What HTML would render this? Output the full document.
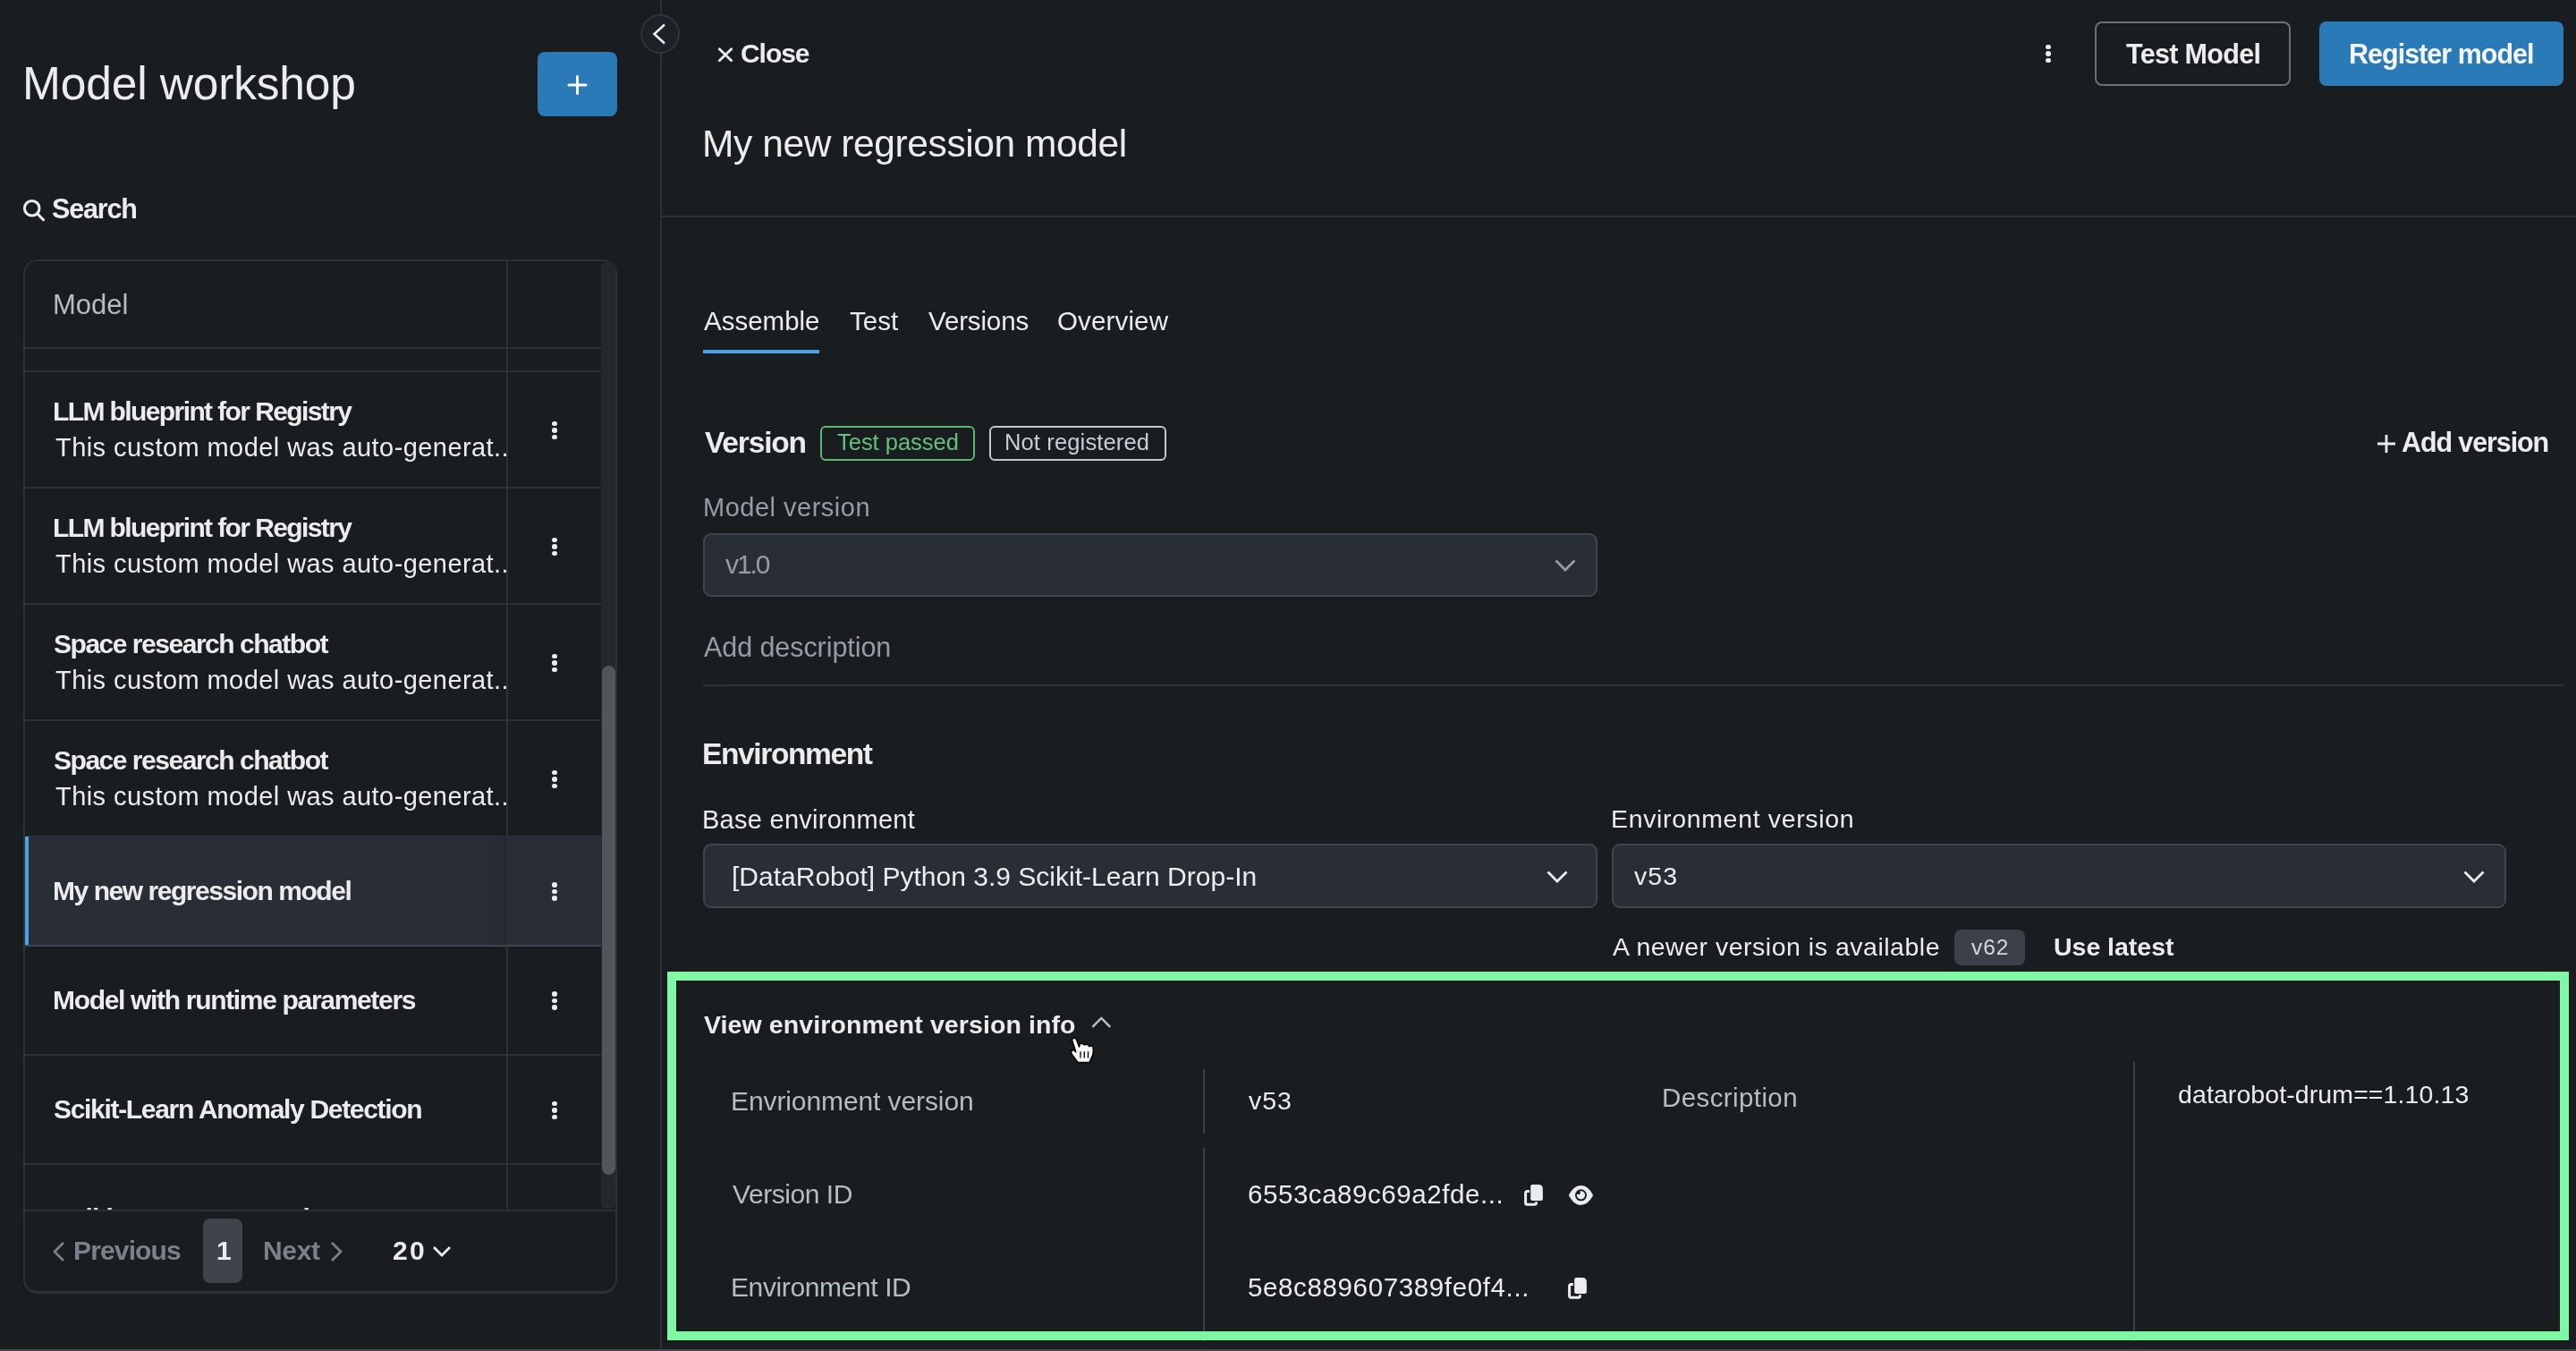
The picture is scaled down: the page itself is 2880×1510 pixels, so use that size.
<!DOCTYPE html>
<html><head><meta charset="utf-8"><title>Model workshop</title>
<style>
html,body{margin:0;padding:0;}
body{width:2880px;height:1510px;background:#191d20;position:relative;overflow:hidden;font-family:"Liberation Sans",sans-serif;}
.t{position:absolute;white-space:nowrap;will-change:transform;}
svg{overflow:visible}
</style></head><body>
<div style="position:absolute;left:26px;top:290px;width:664px;height:1156px;box-sizing:border-box;border:2px solid #2c3037;border-bottom-width:3.5px;border-radius:16px;"></div>
<div style="position:absolute;left:672px;top:292px;width:16px;height:1059px;background:#24272c;border-radius:8px 14px 8px 8px;"></div>
<div style="position:absolute;left:673px;top:744px;width:15px;height:569px;background:#52565c;border-radius:8px;"></div>
<div style="position:absolute;left:28px;top:388px;width:644px;height:2px;background:#2c3037;"></div>
<div style="position:absolute;left:28px;top:414px;width:644px;height:2px;background:#2c3037;"></div>
<div style="position:absolute;left:28px;top:544px;width:644px;height:2px;background:#2c3037;"></div>
<div style="position:absolute;left:28px;top:674px;width:644px;height:2px;background:#2c3037;"></div>
<div style="position:absolute;left:28px;top:804px;width:644px;height:2px;background:#2c3037;"></div>
<div style="position:absolute;left:28px;top:934px;width:644px;height:2px;background:#2c3037;"></div>
<div style="position:absolute;left:28px;top:1056px;width:644px;height:2px;background:#2c3037;"></div>
<div style="position:absolute;left:28px;top:1178px;width:644px;height:2px;background:#2c3037;"></div>
<div style="position:absolute;left:28px;top:1300px;width:644px;height:2px;background:#2c3037;"></div>
<div style="position:absolute;left:28px;top:1352px;width:660px;height:2px;background:#2c3037;"></div>
<div style="position:absolute;left:566px;top:292px;width:2px;height:1060px;background:#2c3037;"></div>
<div style="position:absolute;left:28px;top:935px;width:644px;height:121px;background:#292e36;"></div>
<div style="position:absolute;left:543px;top:935px;width:23px;height:121px;background:linear-gradient(90deg,rgba(34,38,45,0),#242830);"></div>
<div style="position:absolute;left:28px;top:935px;width:4px;height:121px;background:#4aa3e8;"></div>
<div style="position:absolute;left:28px;top:1056px;width:644px;height:2px;background:#41464e;"></div>
<div id="t0" class="t" style="left:25.40px;top:67.71px;font-size:51.5px;line-height:51.5px;font-weight:400;letter-spacing:-0.154px;color:#ececee;">Model workshop</div>
<div style="position:absolute;left:601px;top:58px;width:89px;height:72px;background:#2a7ab8;border-radius:8px;"></div>
<svg style="position:absolute;left:634px;top:84px" width="24" height="24" viewBox="0 0 24 24"><path d="M11.5 1.5V20.5M2 11H21" stroke="#fff" stroke-width="3" stroke-linecap="round"/></svg>
<svg style="position:absolute;left:22px;top:219px" width="32" height="32" viewBox="0 0 32 32"><circle cx="13.7" cy="13.8" r="8.3" fill="none" stroke="#ececee" stroke-width="3"/><path d="M19.8 19.9L26.6 26.7" stroke="#ececee" stroke-width="3" stroke-linecap="round"/></svg>
<div id="t1" class="t" style="left:58.00px;top:218.43px;font-size:30.5px;line-height:30.5px;font-weight:700;letter-spacing:-1.160px;color:#ececee;">Search</div>
<div id="t2" class="t" style="left:58.80px;top:324.56px;font-size:31.0px;line-height:31.0px;font-weight:400;letter-spacing:0.000px;color:#b7bbc2;">Model</div>
<div id="t3" class="t" style="left:59.00px;top:444.61px;font-size:30.0px;line-height:30.0px;font-weight:700;letter-spacing:-1.600px;color:#ececee;">LLM blueprint for Registry</div>
<div id="t4" class="t" style="left:62.00px;top:486.45px;font-size:29.0px;line-height:29.0px;font-weight:400;letter-spacing:0.429px;color:#ececee;width:504px;">This custom model was auto-generat..</div>
<div style="position:absolute;left:617.2px;top:470.7px;width:5.6px;height:5.6px;background:#ececee;border-radius:50%;"></div>
<div style="position:absolute;left:617.2px;top:478.2px;width:5.6px;height:5.6px;background:#ececee;border-radius:50%;"></div>
<div style="position:absolute;left:617.2px;top:485.7px;width:5.6px;height:5.6px;background:#ececee;border-radius:50%;"></div>
<div id="t5" class="t" style="left:59.00px;top:574.61px;font-size:30.0px;line-height:30.0px;font-weight:700;letter-spacing:-1.600px;color:#ececee;">LLM blueprint for Registry</div>
<div id="t6" class="t" style="left:62.00px;top:616.45px;font-size:29.0px;line-height:29.0px;font-weight:400;letter-spacing:0.429px;color:#ececee;width:504px;">This custom model was auto-generat..</div>
<div style="position:absolute;left:617.2px;top:600.7px;width:5.6px;height:5.6px;background:#ececee;border-radius:50%;"></div>
<div style="position:absolute;left:617.2px;top:608.2px;width:5.6px;height:5.6px;background:#ececee;border-radius:50%;"></div>
<div style="position:absolute;left:617.2px;top:615.7px;width:5.6px;height:5.6px;background:#ececee;border-radius:50%;"></div>
<div id="t7" class="t" style="left:60.00px;top:704.61px;font-size:30.0px;line-height:30.0px;font-weight:700;letter-spacing:-1.476px;color:#ececee;">Space research chatbot</div>
<div id="t8" class="t" style="left:62.00px;top:746.45px;font-size:29.0px;line-height:29.0px;font-weight:400;letter-spacing:0.429px;color:#ececee;width:504px;">This custom model was auto-generat..</div>
<div style="position:absolute;left:617.2px;top:730.7px;width:5.6px;height:5.6px;background:#ececee;border-radius:50%;"></div>
<div style="position:absolute;left:617.2px;top:738.2px;width:5.6px;height:5.6px;background:#ececee;border-radius:50%;"></div>
<div style="position:absolute;left:617.2px;top:745.7px;width:5.6px;height:5.6px;background:#ececee;border-radius:50%;"></div>
<div id="t9" class="t" style="left:60.00px;top:834.61px;font-size:30.0px;line-height:30.0px;font-weight:700;letter-spacing:-1.476px;color:#ececee;">Space research chatbot</div>
<div id="t10" class="t" style="left:62.00px;top:876.45px;font-size:29.0px;line-height:29.0px;font-weight:400;letter-spacing:0.429px;color:#ececee;width:504px;">This custom model was auto-generat..</div>
<div style="position:absolute;left:617.2px;top:860.7px;width:5.6px;height:5.6px;background:#ececee;border-radius:50%;"></div>
<div style="position:absolute;left:617.2px;top:868.2px;width:5.6px;height:5.6px;background:#ececee;border-radius:50%;"></div>
<div style="position:absolute;left:617.2px;top:875.7px;width:5.6px;height:5.6px;background:#ececee;border-radius:50%;"></div>
<div id="t11" class="t" style="left:59.00px;top:980.65px;font-size:30.0px;line-height:30.0px;font-weight:700;letter-spacing:-1.455px;color:#ececee;">My new regression model</div>
<div style="position:absolute;left:617.2px;top:986.35px;width:5.6px;height:5.6px;background:#ececee;border-radius:50%;"></div>
<div style="position:absolute;left:617.2px;top:993.85px;width:5.6px;height:5.6px;background:#ececee;border-radius:50%;"></div>
<div style="position:absolute;left:617.2px;top:1001.35px;width:5.6px;height:5.6px;background:#ececee;border-radius:50%;"></div>
<div id="t12" class="t" style="left:59.00px;top:1102.71px;font-size:30.0px;line-height:30.0px;font-weight:700;letter-spacing:-1.321px;color:#ececee;">Model with runtime parameters</div>
<div style="position:absolute;left:617.2px;top:1108.4px;width:5.6px;height:5.6px;background:#ececee;border-radius:50%;"></div>
<div style="position:absolute;left:617.2px;top:1115.9px;width:5.6px;height:5.6px;background:#ececee;border-radius:50%;"></div>
<div style="position:absolute;left:617.2px;top:1123.4px;width:5.6px;height:5.6px;background:#ececee;border-radius:50%;"></div>
<div id="t13" class="t" style="left:60.00px;top:1225.11px;font-size:30.0px;line-height:30.0px;font-weight:700;letter-spacing:-1.310px;color:#ececee;">Scikit-Learn Anomaly Detection</div>
<div style="position:absolute;left:617.2px;top:1230.8px;width:5.6px;height:5.6px;background:#ececee;border-radius:50%;"></div>
<div style="position:absolute;left:617.2px;top:1238.3px;width:5.6px;height:5.6px;background:#ececee;border-radius:50%;"></div>
<div style="position:absolute;left:617.2px;top:1245.8px;width:5.6px;height:5.6px;background:#ececee;border-radius:50%;"></div>
<div style="position:absolute;left:28px;top:1302px;width:538px;height:50px;overflow:hidden">
<div id="t14" class="t" style="left:33.00px;top:44.61px;font-size:30.0px;line-height:30.0px;font-weight:700;letter-spacing:-1.045px;color:#ececee;">Scikit-Learn Regression</div>
</div>
<svg style="position:absolute;left:56px;top:1386px" width="20" height="26" viewBox="0 0 20 26"><path d="M15 3L5 13L15 23" fill="none" stroke="#7b8189" stroke-width="2.8"/></svg>
<div id="t15" class="t" style="left:82.00px;top:1382.51px;font-size:30.0px;line-height:30.0px;font-weight:700;letter-spacing:-0.857px;color:#7b8189;">Previous</div>
<div style="position:absolute;left:227px;top:1362px;width:44px;height:72px;background:#3f444c;border-radius:8px;"></div>
<div id="t16" class="t" style="left:241.80px;top:1382.51px;font-size:30.0px;line-height:30.0px;font-weight:700;letter-spacing:0.000px;color:#ececee;">1</div>
<div id="t17" class="t" style="left:293.80px;top:1382.51px;font-size:30.0px;line-height:30.0px;font-weight:700;letter-spacing:-0.333px;color:#7b8189;">Next</div>
<svg style="position:absolute;left:366px;top:1386px" width="20" height="26" viewBox="0 0 20 26"><path d="M5 3L15 13L5 23" fill="none" stroke="#7b8189" stroke-width="2.8"/></svg>
<div id="t18" class="t" style="left:438.80px;top:1382.51px;font-size:30.0px;line-height:30.0px;font-weight:700;letter-spacing:2.200px;color:#ececee;">20</div>
<svg style="position:absolute;left:482px;top:1390px" width="24" height="18" viewBox="0 0 24 18"><path d="M3 4L12 13L21 4" fill="none" stroke="#ececee" stroke-width="2.8"/></svg>
<div style="position:absolute;left:738px;top:0px;width:2px;height:1510px;background:#2c3037;"></div>
<div style="position:absolute;left:716px;top:16px;width:44px;height:44px;box-sizing:border-box;background:#1e2126;border:2px solid #30343b;border-radius:50%;"></div>
<svg style="position:absolute;left:724px;top:22px" width="28" height="32" viewBox="0 0 28 32"><path d="M19 5.5L7.5 16L19 26.5" fill="none" stroke="#ececee" stroke-width="2.6"/></svg>
<svg style="position:absolute;left:798px;top:48px" width="26" height="26" viewBox="0 0 26 26"><path d="M5.5 6L20.5 20.5M20.5 6L5.5 20.5" stroke="#ececee" stroke-width="2.8"/></svg>
<div id="t19" class="t" style="left:828.20px;top:44.70px;font-size:30.0px;line-height:30.0px;font-weight:700;letter-spacing:-1.050px;color:#ececee;">Close</div>
<div id="t20" class="t" style="left:785.00px;top:139.62px;font-size:42.5px;line-height:42.5px;font-weight:400;letter-spacing:-0.409px;color:#ececee;">My new regression model</div>
<div style="position:absolute;left:740px;top:241px;width:2140px;height:2px;background:#2c3037;"></div>
<div style="position:absolute;left:2287.2px;top:49.7px;width:5.6px;height:5.6px;background:#ececee;border-radius:50%;"></div>
<div style="position:absolute;left:2287.2px;top:57.2px;width:5.6px;height:5.6px;background:#ececee;border-radius:50%;"></div>
<div style="position:absolute;left:2287.2px;top:64.7px;width:5.6px;height:5.6px;background:#ececee;border-radius:50%;"></div>
<div style="position:absolute;left:2342px;top:24px;width:219px;height:72px;box-sizing:border-box;border:2px solid #6b7079;border-radius:8px;"></div>
<div id="t21" class="t" style="left:2377.00px;top:44.93px;font-size:30.5px;line-height:30.5px;font-weight:700;letter-spacing:-0.667px;color:#ececee;">Test Model</div>
<div style="position:absolute;left:2593px;top:24px;width:273px;height:72px;background:#2a7ab8;border-radius:8px;"></div>
<div id="t22" class="t" style="left:2625.80px;top:44.93px;font-size:30.5px;line-height:30.5px;font-weight:700;letter-spacing:-0.985px;color:#f4f6f8;">Register model</div>
<div id="t23" class="t" style="left:787.20px;top:343.83px;font-size:29.5px;line-height:29.5px;font-weight:400;letter-spacing:0.000px;color:#ececee;">Assemble</div>
<div id="t24" class="t" style="left:949.60px;top:343.83px;font-size:29.5px;line-height:29.5px;font-weight:400;letter-spacing:0.000px;color:#ececee;">Test</div>
<div id="t25" class="t" style="left:1037.60px;top:343.83px;font-size:29.5px;line-height:29.5px;font-weight:400;letter-spacing:-0.143px;color:#ececee;">Versions</div>
<div id="t26" class="t" style="left:1182.40px;top:343.83px;font-size:29.5px;line-height:29.5px;font-weight:400;letter-spacing:0.143px;color:#ececee;">Overview</div>
<div style="position:absolute;left:786px;top:391px;width:130px;height:4px;background:#4aa3e8;"></div>
<div id="t27" class="t" style="left:788.00px;top:477.54px;font-size:33.5px;line-height:33.5px;font-weight:700;letter-spacing:-1.167px;color:#ececee;">Version</div>
<div style="position:absolute;left:917px;top:475.5px;width:173px;height:39px;box-sizing:border-box;border:2px solid #5cb872;border-radius:6px;"></div>
<div id="t28" class="t" style="left:935.80px;top:481.61px;font-size:25.5px;line-height:25.5px;font-weight:400;letter-spacing:-0.020px;color:#64c07c;">Test passed</div>
<div style="position:absolute;left:1106px;top:475.5px;width:198px;height:39px;box-sizing:border-box;border:2px solid #c5c8cd;border-radius:6px;"></div>
<div id="t29" class="t" style="left:1123.00px;top:481.61px;font-size:25.5px;line-height:25.5px;font-weight:400;letter-spacing:0.138px;color:#c9ccd1;">Not registered</div>
<svg style="position:absolute;left:2655px;top:483px" width="26" height="26" viewBox="0 0 26 26"><path d="M13 3V23M3 13H23" stroke="#ececee" stroke-width="2.8"/></svg>
<div id="t30" class="t" style="left:2685.00px;top:479.38px;font-size:30.5px;line-height:30.5px;font-weight:700;letter-spacing:-1.100px;color:#ececee;">Add version</div>
<div id="t31" class="t" style="left:786.00px;top:552.65px;font-size:29.0px;line-height:29.0px;font-weight:400;letter-spacing:0.500px;color:#969ca7;">Model version</div>
<div style="position:absolute;left:786px;top:596px;width:1000px;height:71px;box-sizing:border-box;background:#292e36;border:2px solid #40454d;border-radius:9px;"></div>
<div id="t32" class="t" style="left:811.00px;top:615.61px;font-size:30.0px;line-height:30.0px;font-weight:400;letter-spacing:-2.067px;color:#969ca7;">v1.0</div>
<svg style="position:absolute;left:1736px;top:622px" width="28" height="18" viewBox="0 0 28 18"><path d="M3.5 4.5L14 15L24.5 4.5" fill="none" stroke="#969ca7" stroke-width="2.8"/></svg>
<div id="t33" class="t" style="left:787.20px;top:708.38px;font-size:30.5px;line-height:30.5px;font-weight:400;letter-spacing:-0.071px;color:#969ca7;">Add description</div>
<div style="position:absolute;left:786px;top:765px;width:2080px;height:2px;background:#2c3037;"></div>
<div id="t34" class="t" style="left:785.00px;top:825.94px;font-size:33.5px;line-height:33.5px;font-weight:700;letter-spacing:-1.380px;color:#ececee;">Environment</div>
<div id="t35" class="t" style="left:785.00px;top:902.05px;font-size:29.0px;line-height:29.0px;font-weight:400;letter-spacing:0.267px;color:#ececee;">Base environment</div>
<div style="position:absolute;left:786px;top:943px;width:1000px;height:72px;box-sizing:border-box;background:#292e36;border:2px solid #40454d;border-radius:9px;"></div>
<div id="t36" class="t" style="left:818.20px;top:965.31px;font-size:30.0px;line-height:30.0px;font-weight:400;letter-spacing:0.005px;color:#ececee;">[DataRobot] Python 3.9 Scikit-Learn Drop-In</div>
<svg style="position:absolute;left:1727px;top:970px" width="28" height="18" viewBox="0 0 28 18"><path d="M3.5 4.5L14 15L24.5 4.5" fill="none" stroke="#ececee" stroke-width="2.8"/></svg>
<div id="t37" class="t" style="left:1801.20px;top:900.97px;font-size:28.5px;line-height:28.5px;font-weight:400;letter-spacing:0.656px;color:#ececee;">Environment version</div>
<div style="position:absolute;left:1802px;top:943px;width:1000px;height:72px;box-sizing:border-box;background:#292e36;border:2px solid #40454d;border-radius:9px;"></div>
<div id="t38" class="t" style="left:1826.80px;top:965.47px;font-size:28.5px;line-height:28.5px;font-weight:400;letter-spacing:1.100px;color:#ececee;">v53</div>
<svg style="position:absolute;left:2752px;top:970px" width="28" height="18" viewBox="0 0 28 18"><path d="M3.5 4.5L14 15L24.5 4.5" fill="none" stroke="#ececee" stroke-width="2.8"/></svg>
<div id="t39" class="t" style="left:1803.20px;top:1044.47px;font-size:28.5px;line-height:28.5px;font-weight:400;letter-spacing:0.511px;color:#ececee;">A newer version is available</div>
<div style="position:absolute;left:2185px;top:1039.4px;width:79px;height:39.4px;background:#3b4049;border-radius:8px;"></div>
<div id="t40" class="t" style="left:2204.40px;top:1047.06px;font-size:24.5px;line-height:24.5px;font-weight:400;letter-spacing:0.900px;color:#d5d8dc;">v62</div>
<div id="t41" class="t" style="left:2296.20px;top:1044.47px;font-size:28.5px;line-height:28.5px;font-weight:700;letter-spacing:-0.022px;color:#ececee;">Use latest</div>
<div id="t42" class="t" style="left:787.40px;top:1130.57px;font-size:28.5px;line-height:28.5px;font-weight:700;letter-spacing:0.093px;color:#ececee;">View environment version info</div>
<svg style="position:absolute;left:1216px;top:1130px" width="30" height="24" viewBox="0 0 30 24"><path d="M5.4 17.8L15.3 7.9L25.2 17.8" fill="none" stroke="#bcc1c9" stroke-width="2.4"/></svg>
<div id="t43" class="t" style="left:817.40px;top:1215.61px;font-size:30.0px;line-height:30.0px;font-weight:400;letter-spacing:-0.100px;color:#b7bbc2;">Envrionment version</div>
<div style="position:absolute;left:1345px;top:1195px;width:2px;height:72px;background:#3c4048;"></div>
<div style="position:absolute;left:1345px;top:1283px;width:2px;height:216px;background:#3c4048;"></div>
<div id="t44" class="t" style="left:1395.80px;top:1216.27px;font-size:28.5px;line-height:28.5px;font-weight:400;letter-spacing:1.000px;color:#ececee;">v53</div>
<div id="t45" class="t" style="left:819.00px;top:1320.20px;font-size:30.0px;line-height:30.0px;font-weight:400;letter-spacing:-0.444px;color:#b7bbc2;">Version ID</div>
<div id="t46" class="t" style="left:1395.00px;top:1319.73px;font-size:29.5px;line-height:29.5px;font-weight:400;letter-spacing:0.556px;color:#ececee;">6553ca89c69a2fde...</div>
<div id="t47" class="t" style="left:817.00px;top:1423.61px;font-size:30.0px;line-height:30.0px;font-weight:400;letter-spacing:-0.385px;color:#b7bbc2;">Environment ID</div>
<div id="t48" class="t" style="left:1395.00px;top:1423.73px;font-size:29.5px;line-height:29.5px;font-weight:400;letter-spacing:0.630px;color:#ececee;">5e8c889607389fe0f4...</div>
<div id="t49" class="t" style="left:1857.60px;top:1212.23px;font-size:29.5px;line-height:29.5px;font-weight:400;letter-spacing:0.400px;color:#b7bbc2;">Description</div>
<div style="position:absolute;left:2385px;top:1187px;width:2px;height:312px;background:#3c4048;"></div>
<div id="t50" class="t" style="left:2435.20px;top:1208.97px;font-size:28.5px;line-height:28.5px;font-weight:400;letter-spacing:0.091px;color:#ececee;">datarobot-drum==1.10.13</div>
<svg style="position:absolute;left:1700px;top:1320px" width="30" height="30" viewBox="0 0 30 30"><path d="M11.2 6Q11.2 4 13.2 4H19.9Q24.9 4 24.9 9V19.9Q24.9 21.9 22.9 21.9H13.2Q11.2 21.9 11.2 19.9Z" fill="#ececee"/><path d="M10 11.6H7.6Q5.6 11.6 5.6 13.6V24.2Q5.6 26.2 7.6 26.2H15.5Q17.5 26.2 17.5 24.2V23.2" fill="none" stroke="#ececee" stroke-width="3"/></svg>
<svg style="position:absolute;left:1749px;top:1424px" width="30" height="30" viewBox="0 0 30 30"><path d="M11.2 6Q11.2 4 13.2 4H19.9Q24.9 4 24.9 9V19.9Q24.9 21.9 22.9 21.9H13.2Q11.2 21.9 11.2 19.9Z" fill="#ececee"/><path d="M10 11.6H7.6Q5.6 11.6 5.6 13.6V24.2Q5.6 26.2 7.6 26.2H15.5Q17.5 26.2 17.5 24.2V23.2" fill="none" stroke="#ececee" stroke-width="3"/></svg>
<svg style="position:absolute;left:1750px;top:1320px" width="36" height="32" viewBox="0 0 36 32"><path d="M3.8 15.9C8 8.5 12 5.1 17.45 5.1C23 5.1 27 8.5 31.1 15.9C27 23.3 23 26.7 17.45 26.7C12 26.7 8 23.3 3.8 15.9Z" fill="#ececee"/><circle cx="17.5" cy="15.8" r="5.6" fill="none" stroke="#1a1d21" stroke-width="1.9"/><circle cx="14.8" cy="13.1" r="2.1" fill="#1a1d21"/></svg>
<svg style="position:absolute;left:1190px;top:1125px" width="40" height="70" viewBox="0 0 40 70"><path d="M8.4 37Q10.3 34 13.2 36.3L16.6 45L17.2 41.8Q19 40.6 21 41.8L22.6 43Q24.6 41.6 26.6 42.8L27.8 44.6Q30.2 43.2 32 45.2L32.4 50Q32.2 54.5 30.2 57.5L28 62.6H15.2L8 53Q6.6 50.2 8.6 49Q10.6 48.2 12.4 50.2L12.8 50.8Z" fill="#f6f6f6" stroke="#000" stroke-width="1.5" stroke-linejoin="round"/><path d="M18 50.2V57.6M22.3 50.2V57.6M26.5 50.2V57.6" stroke="#000" stroke-width="1.3"/></svg>
<div style="position:absolute;left:0px;top:1508px;width:2880px;height:2px;background:#43474c;"></div>
<div style="position:absolute;left:746px;top:1086px;width:2126px;height:412px;box-sizing:border-box;border:10px solid #80f7a2;"></div>
</body></html>
